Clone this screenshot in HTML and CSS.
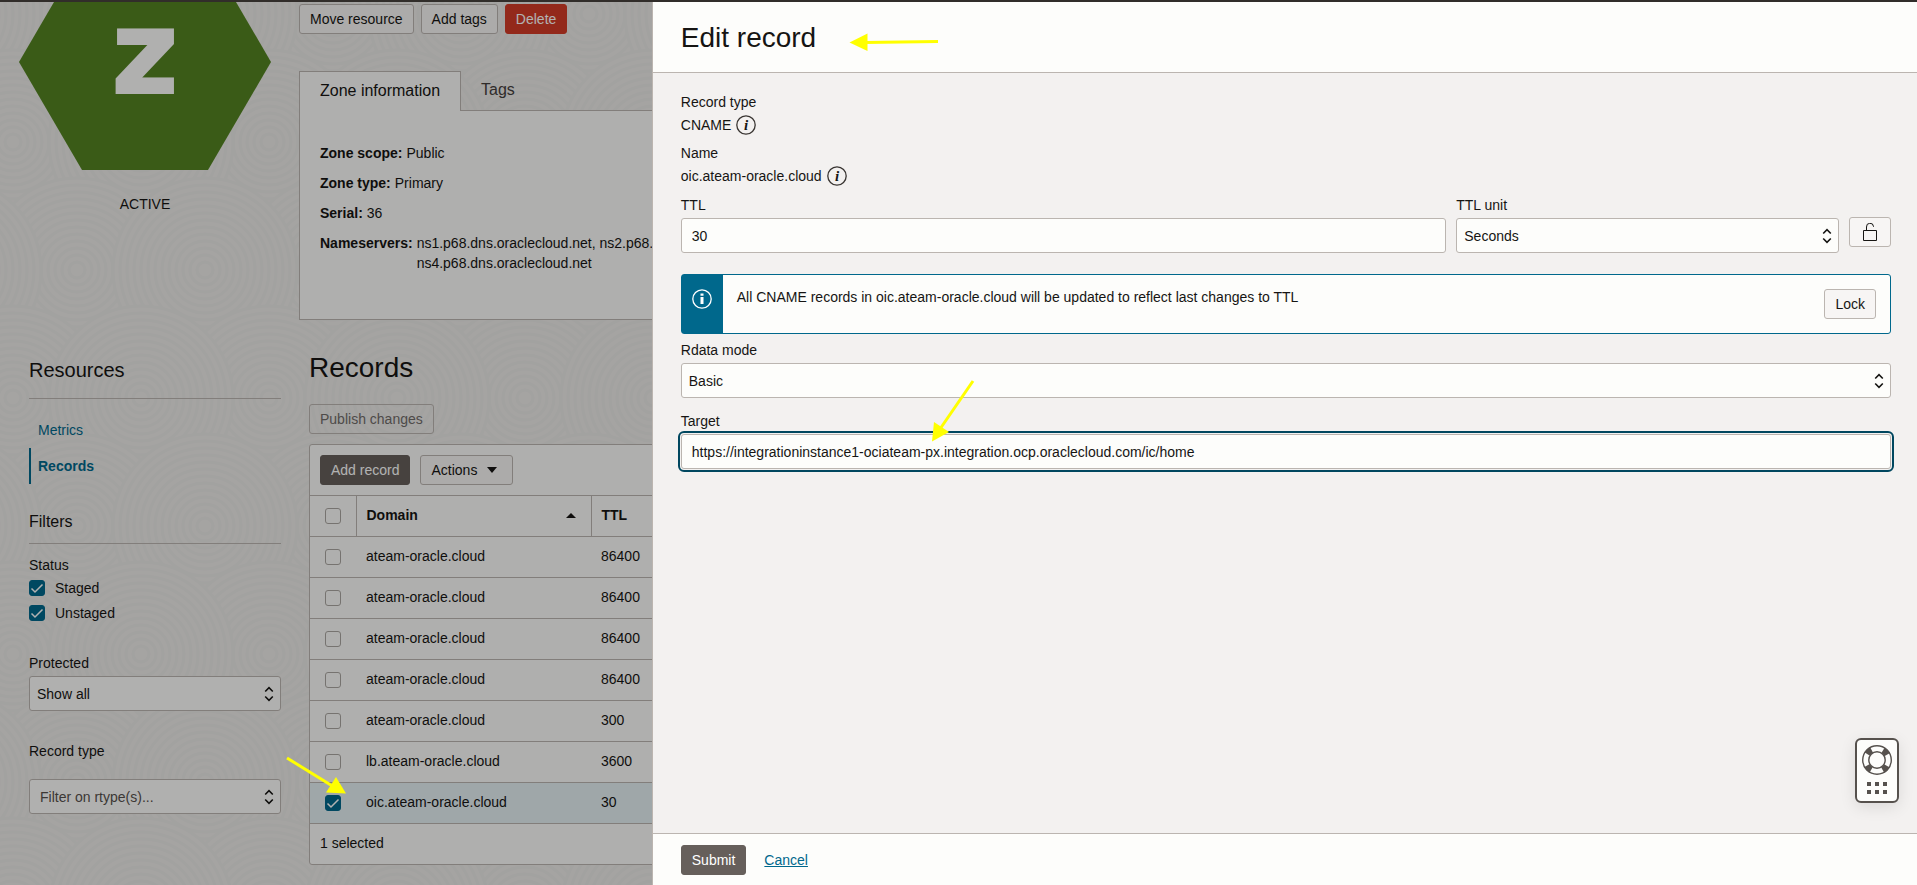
FILE: index.html
```html
<!DOCTYPE html>
<html lang="en">
<head>
    <meta charset="UTF-8">
    <meta name="viewport" content="width=device-width, initial-scale=1.0">
    <title>Edit record</title>
    <link rel="stylesheet" href="styles.css">
</head>
<body>
    <div class="app">
        <div class="page">
            <aside class="sidebar">
                <div class="zone-status">
                    <svg class="hexagon" width="252" height="168" viewBox="0 48 252 168">
                        <polygon points="0,108 63,0 189,0 252,108 189,216 63,216" fill="#538321"/>
                        <text x="126" y="139" text-anchor="middle">z</text>
                    </svg>
                    <p>ACTIVE</p>
                </div>

                <nav class="resources">
                    <h2>Resources</h2>
                    <ul>
                        <li><a href="#">Metrics</a></li>
                        <li class="current"><a href="#">Records</a></li>
                    </ul>
                </nav>

                <form class="filters">
                    <h3>Filters</h3>
                    <fieldset>
                        <legend>Status</legend>
                        <label class="check"><input type="checkbox" checked>Staged</label>
                        <label class="check"><input type="checkbox" checked>Unstaged</label>
                    </fieldset>
                    <div class="filter">
                        <label for="protected">Protected</label>
                        <select id="protected"><option>Show all</option></select>
                    </div>
                    <div class="filter filter-type">
                        <label for="rtype">Record type</label>
                        <input type="text" id="rtype" class="combo" placeholder="Filter on rtype(s)...">
                    </div>
                </form>
            </aside>

            <main class="content">
                <div class="actions">
                    <button type="button">Move resource</button>
                    <button type="button">Add tags</button>
                    <button type="button" class="danger">Delete</button>
                </div>

                <div class="tabs" role="tablist">
                    <button type="button" role="tab" class="tab active">Zone information</button>
                    <button type="button" role="tab" class="tab">Tags</button>
                </div>
                <dl class="zone-info">
                    <div><dt>Zone scope:</dt><dd>Public</dd></div>
                    <div><dt>Zone type:</dt><dd>Primary</dd></div>
                    <div><dt>Serial:</dt><dd>36</dd></div>
                    <div><dt>Nameservers:</dt><dd>ns1.p68.dns.oraclecloud.net, ns2.p68.dns.oraclecloud.net,<br>ns4.p68.dns.oraclecloud.net</dd></div>
                </dl>

                <section class="records">
                    <h1>Records</h1>
                    <button type="button" disabled>Publish changes</button>

                    <div class="panel">
                        <div class="toolbar">
                            <button type="button" class="primary">Add record</button>
                            <button type="button" class="menu-button">Actions
                                <svg width="10" height="6" viewBox="0 0 10 6"><path d="M0 0h10L5 6z" fill="#161513"/></svg>
                            </button>
                        </div>
                        <table>
                            <thead>
                                <tr>
                                    <th class="col-check"><input type="checkbox" aria-label="Select all"></th>
                                    <th class="col-domain">
                                        <div class="sort">Domain
                                            <svg width="10" height="5" viewBox="0 0 10 5"><path d="M0 5h10L5 0z" fill="#161513"/></svg>
                                        </div>
                                    </th>
                                    <th>TTL</th>
                                </tr>
                            </thead>
                            <tbody>
                                <tr><td class="col-check"><input type="checkbox" aria-label="Select row"></td><td>ateam-oracle.cloud</td><td>86400</td></tr>
                                <tr><td class="col-check"><input type="checkbox" aria-label="Select row"></td><td>ateam-oracle.cloud</td><td>86400</td></tr>
                                <tr><td class="col-check"><input type="checkbox" aria-label="Select row"></td><td>ateam-oracle.cloud</td><td>86400</td></tr>
                                <tr><td class="col-check"><input type="checkbox" aria-label="Select row"></td><td>ateam-oracle.cloud</td><td>86400</td></tr>
                                <tr><td class="col-check"><input type="checkbox" aria-label="Select row"></td><td>ateam-oracle.cloud</td><td>300</td></tr>
                                <tr><td class="col-check"><input type="checkbox" aria-label="Select row"></td><td>lb.ateam-oracle.cloud</td><td>3600</td></tr>
                                <tr class="selected"><td class="col-check"><input type="checkbox" aria-label="Select row" checked></td><td>oic.ateam-oracle.cloud</td><td>30</td></tr>
                            </tbody>
                        </table>
                        <p class="count">1 selected</p>
                    </div>
                </section>
            </main>
        </div>

        <div class="scrim"></div>

        <form class="drawer">
            <header class="drawer-header">
                <h1>Edit record</h1>
            </header>

            <div class="drawer-body">
                <div class="summary">
                    <div>
                        <p class="label">Record type</p>
                        <p class="value">CNAME
                            <svg class="info" width="20" height="20" viewBox="0 0 20 20"><circle cx="10" cy="10" r="9.2"/><text x="10" y="15">i</text></svg>
                        </p>
                    </div>
                    <div>
                        <p class="label">Name</p>
                        <p class="value">oic.ateam-oracle.cloud
                            <svg class="info" width="20" height="20" viewBox="0 0 20 20"><circle cx="10" cy="10" r="9.2"/><text x="10" y="15">i</text></svg>
                        </p>
                    </div>
                </div>

                <div class="ttl-row">
                    <div class="ttl">
                        <label class="label" for="ttl">TTL</label>
                        <input type="text" id="ttl" value="30">
                    </div>
                    <div class="ttl-unit">
                        <label class="label" for="unit">TTL unit</label>
                        <select id="unit"><option>Seconds</option></select>
                    </div>
                    <button type="button" class="lock-toggle" aria-label="Unlocked">
                        <svg width="14" height="18" viewBox="0 0 14 18" fill="none" stroke="#161513"><path d="M.5 7.5h13v10H.5z"/><path d="M3.5 7.5V4a3.5 3.5 0 0 1 7-.5V4"/></svg>
                    </button>
                </div>

                <div class="notice">
                    <div class="notice-icon">
                        <svg width="20" height="20" viewBox="0 0 20 20"><circle cx="10" cy="10" r="9.2" fill="none" stroke="#fff" stroke-width="1.3"/><path d="M8.5 4.5h3v2.200h-3zM8.5 8h3v7h-3z" fill="#fff"/></svg>
                    </div>
                    <p>All CNAME records in oic.ateam-oracle.cloud will be updated to reflect last changes to TTL</p>
                    <button type="button">Lock</button>
                </div>

                <div class="field">
                    <label class="label" for="mode">Rdata mode</label>
                    <select id="mode"><option>Basic</option></select>
                </div>
                <div class="field">
                    <label class="label" for="target">Target</label>
                    <input type="text" id="target" class="focused" value="https://integrationinstance1-ociateam-px.integration.ocp.oraclecloud.com/ic/home">
                </div>
            </div>

            <footer class="drawer-footer">
                <button type="submit" class="primary">Submit</button>
                <a href="#">Cancel</a>
            </footer>
        </form>

        <button type="button" class="help" aria-label="Help">
            <svg width="30" height="50" viewBox="0 0 30 50">
                <g fill="none" stroke="#56514d">
                    <circle cx="15" cy="15" r="11.5" stroke-width="6.5" stroke-dasharray="6 12.064" stroke-dashoffset="-6.032"/>
                    <circle cx="15" cy="15" r="14.3" stroke-width="1.4"/>
                    <circle cx="15" cy="15" r="8.2" stroke-width="1.4"/>
                </g>
                <path d="M5 37h4v4H5zM13 37h4v4h-4zM21 37h4v4h-4zM5 45h4v4H5zM13 45h4v4h-4zM21 45h4v4h-4z" fill="#56514d"/>
            </svg>
        </button>

        <!-- callout arrows -->
        <svg class="arrows" width="100%" height="100%">
            <g stroke="#ff0" stroke-width="3">
                <path d="M938 39.500 865 40.500"/>
                <path d="M973 379 940 427"/>
                <path d="M287 756 334 785"/>
            </g>
            <g fill="#ff0">
                <path d="M849.500 40.500 867.500 31.500v17.500z"/>
                <path d="M932 439.500 934 420l15 10z"/>
                <path d="M346 791.500 336 775l-10 15.500z"/>
            </g>
        </svg>
    </div>
</body>
</html>
```
FILE: styles.css
```css
* {
    box-sizing: border-box;
}
body {
    margin: 0;
    color: #161513;
    font-family: "Liberation Sans", Arial, sans-serif;
    font-size: 14px;
    line-height: 20px;
}
h1, h2, h3, p, ul, dl, dd {
    margin: 0;
    padding: 0;
    font-weight: normal;
}
h1 {
    font-size: 28px;
    line-height: 36px;
}
a {
    color: #00688c;
}
.app {
    position: relative;
    height: 100vh;
    overflow: hidden;
    border-top: 2px solid #312d2a;
}
.page {
    isolation: isolate;
    display: flex;
    height: 100%;
    overflow: hidden;
    background-color: #edebe9;
    background-image: url("data:image/svg+xml,%3Csvg xmlns='http://www.w3.org/2000/svg' width='256' height='256'%3E%3Cdefs%3E%3Cg id='a' fill='none' stroke='%23e9e8e6' stroke-width='3'%3E%3Ccircle r='92' fill='%23edebe9'/%3E%3Ccircle r='85'/%3E%3Ccircle r='78'/%3E%3Ccircle r='71'/%3E%3Ccircle r='64'/%3E%3Ccircle r='57'/%3E%3Ccircle r='50'/%3E%3Ccircle r='43'/%3E%3Ccircle r='36'/%3E%3Ccircle r='29'/%3E%3Ccircle r='22'/%3E%3Ccircle r='15'/%3E%3Ccircle r='8'/%3E%3C/g%3E%3C/defs%3E%3Cuse href='%23a' x='77' y='12'/%3E%3Cuse href='%23a' x='205' y='12'/%3E%3Cuse href='%23a' x='-51' y='12'/%3E%3Cuse href='%23a' x='13' y='140'/%3E%3Cuse href='%23a' x='269' y='140'/%3E%3Cuse href='%23a' x='141' y='140'/%3E%3Cuse href='%23a' x='77' y='268'/%3E%3Cuse href='%23a' x='205' y='268'/%3E%3Cuse href='%23a' x='-51' y='268'/%3E%3C/svg%3E");
}

/* controls */
button {
    height: 30px;
    padding: 0 10px;
    border: 1px solid #bbb5b0;
    border-radius: 3px;
    background: #f7f5f4;
    color: #161513;
    font: inherit;
    cursor: pointer;
}
button:disabled {
    background: transparent;
    color: #706c69;
}
.primary {
    border-color: #665f5b;
    background: #665f5b;
    color: #fff;
}
.danger {
    border-color: #d33c27;
    background: #d33c27;
    color: #fff;
}
select, input[type="text"] {
    display: block;
    width: 100%;
    height: 35px;
    padding: 0 10px;
    border: 1px solid #bbb5b0;
    border-radius: 3px;
    background: #fdfdfb;
    color: #161513;
    font: inherit;
    outline: none;
}
select, input.combo {
    appearance: none;
    background-image: url("data:image/svg+xml,%3Csvg xmlns='http://www.w3.org/2000/svg' width='10' height='16' fill='none' stroke='%23161513' stroke-width='1.6'%3E%3Cpath d='M1.2 5.5 5 1.7 8.8 5.5M1.2 10.5 5 14.3 8.8 10.5'/%3E%3C/svg%3E");
    background-repeat: no-repeat;
    background-position: right 6px center;
}
select {
    padding: 0 7px;
}
input::placeholder {
    color: #56514d;
    opacity: 1;
}
input.focused {
    outline: 2px solid #00475f;
    outline-offset: 1px;
}
input[type="checkbox"] {
    appearance: none;
    display: block;
    width: 16px;
    height: 16px;
    margin: 0;
    border: 1px solid #aaa5a1;
    border-radius: 3px;
}
input[type="checkbox"]:checked {
    border-color: #00688c;
    background: #00688c url("data:image/svg+xml,%3Csvg xmlns='http://www.w3.org/2000/svg' width='14' height='14' fill='none' stroke='white' stroke-width='1.5'%3E%3Cpath d='M1.5 7.5 5 11 12.5 3.5'/%3E%3C/svg%3E") center no-repeat;
}

/* sidebar */
.sidebar {
    flex: none;
    width: 290px;
}
.zone-status {
    height: 348px;
    text-align: center;
}
.hexagon {
    display: block;
    overflow: visible;
    margin: 0 auto 24px;
}
.hexagon text {
    fill: #fdfdfb;
    stroke: #fdfdfb;
    stroke-width: 2px;
    font-family: "DejaVu Sans", sans-serif;
    font-size: 115px;
    font-weight: bold;
}
.resources, .filters {
    padding: 0 9px 0 29px;
}
.resources h2 {
    padding: 6px 0 14px;
    border-bottom: 1px solid #bbb5b0;
    font-size: 20px;
    line-height: 28px;
}
.resources ul {
    padding: 13px 0 28px;
    list-style: none;
}
.resources li {
    padding: 8px 9px;
}
.resources .current {
    padding-left: 7px;
    border-left: 2px solid #00688c;
    font-weight: bold;
}
.resources a {
    text-decoration: none;
}
.filters h3 {
    padding-bottom: 11px;
    border-bottom: 1px solid #bbb5b0;
    font-size: 16px;
    line-height: 20px;
}
.filters fieldset {
    margin: 0 0 25px;
    padding: 11px 0 0;
    border: 0;
}
.filters legend {
    float: left;
    width: 100%;
    padding: 0 0 3px;
}
.check {
    clear: both;
    display: flex;
    align-items: center;
    gap: 10px;
    height: 20px;
    margin-bottom: 5px;
}
.filter {
    margin-bottom: 30px;
}
.filter label {
    display: block;
    margin-bottom: 3px;
}
.filter-type label {
    margin-bottom: 18px;
}

/* zone details */
.content {
    flex: 1;
    min-width: 0;
    padding: 2px 9px 0;
}
.actions {
    display: flex;
    gap: 7px;
    margin-bottom: 37px;
}
.tabs {
    display: flex;
}
.tab {
    height: 39px;
    padding: 0 20px 2px;
    border: 0;
    background: none;
    color: #45403d;
    font-size: 16px;
}
.tab.active {
    z-index: 1;
    height: 40px;
    margin-bottom: -1px;
    border: 1px solid #bbb5b0;
    border-bottom: 0;
    border-radius: 0;
    background: #fbfbf9;
    color: #161513;
}
.zone-info {
    height: 210px;
    padding: 32px 20px;
    border: 1px solid #bbb5b0;
    background: #fbfbf9;
}
.zone-info div {
    display: flex;
    gap: 4px;
    margin-bottom: 10px;
}
.zone-info dt {
    font-weight: bold;
}

/* records */
.records {
    padding: 30px 10px 0;
}
.records h1 {
    margin-bottom: 18px;
}
.panel {
    margin-top: 10px;
    border: 1px solid #bbb5b0;
    border-radius: 3px;
    background: #fbfbf9;
}
.toolbar {
    display: flex;
    gap: 10px;
    padding: 10px;
}
.menu-button {
    display: flex;
    align-items: center;
    gap: 10px;
    padding-right: 15px;
}
table {
    width: 100%;
    border-collapse: collapse;
    table-layout: fixed;
    border-bottom: 1px solid #bbb5b0;
}
th, td {
    height: 41px;
    padding: 0 10px 2px;
    border-top: 1px solid #bbb5b0;
    text-align: left;
}
th {
    border-right: 1px solid #bbb5b0;
}
th:last-child {
    border-right: 0;
}
.col-check {
    width: 46px;
    padding: 0 15px;
}
.col-domain {
    width: 235px;
}
.sort {
    display: flex;
    align-items: center;
    justify-content: space-between;
    padding-right: 5px;
}
.selected {
    background: #e4eff3;
}
.count {
    padding: 9px 10px 11px;
}

.scrim {
    position: absolute;
    inset: 0;
    background: rgba(0, 0, 0, 0.3);
}

/* edit drawer */
.drawer {
    position: absolute;
    top: 0;
    right: 0;
    bottom: 0;
    display: flex;
    flex-direction: column;
    width: 66%;
    border-left: 1px solid #bbb5b0;
    background: #f3f1f0;
}
.drawer-header {
    padding: 18px 28px 16px;
    border-bottom: 1px solid #bbb5b0;
    background: #fdfdfb;
}
.drawer-body {
    flex: 1;
    padding: 19px 26px 0 28px;
}
.label {
    display: block;
    margin-bottom: 3px;
}
.summary {
    display: flex;
    flex-direction: column;
    gap: 8px;
    margin-bottom: 9px;
}
.value {
    display: flex;
    align-items: center;
    gap: 5px;
}
.info circle {
    fill: none;
    stroke: #393532;
    stroke-width: 1.3;
}
.info text {
    fill: #161513;
    font-family: "Liberation Serif", serif;
    font-size: 15px;
    font-style: italic;
    font-weight: bold;
    text-anchor: middle;
}
.ttl-row {
    display: flex;
    gap: 10px;
    margin-bottom: 21px;
}
.ttl {
    flex: 2;
}
.ttl-unit {
    flex: 1;
}
.lock-toggle {
    display: flex;
    align-items: center;
    justify-content: center;
    width: 42px;
    margin-top: 22px;
}
.notice {
    display: flex;
    align-items: flex-start;
    height: 60px;
    margin-bottom: 6px;
    border: 1px solid #00688c;
    border-radius: 3px;
    background: #fdfdfb;
}
.notice-icon {
    align-self: stretch;
    width: 41px;
    padding: 14px 0 0 10px;
    background: #00688c;
}
.notice p {
    flex: 1;
    padding: 12px 14px;
}
.notice button {
    margin: 14px;
}
.field {
    margin-bottom: 13px;
}
.drawer-footer {
    display: flex;
    align-items: center;
    gap: 18px;
    padding: 11px 28px 10px;
    border-top: 1px solid #bbb5b0;
    background: #fdfdfb;
}

.help {
    position: absolute;
    right: 18px;
    bottom: 82px;
    display: flex;
    justify-content: center;
    width: 44px;
    height: 65px;
    padding: 5px 0 0;
    border: 2px solid #56514d;
    border-radius: 6px;
    background: #fdfdfb;
    box-shadow: 0 4px 16px rgba(0, 0, 0, 0.1);
}
.arrows {
    position: absolute;
    top: 0;
    left: 0;
    pointer-events: none;
}
```
